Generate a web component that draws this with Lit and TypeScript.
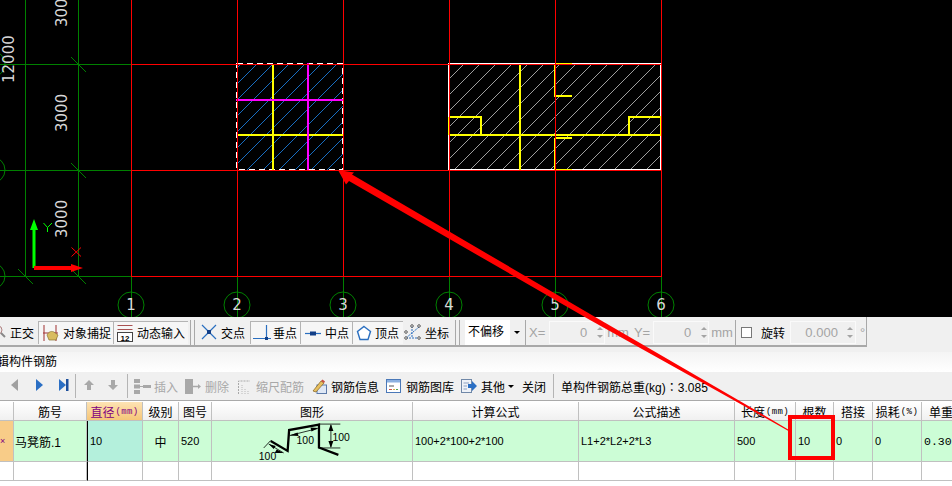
import { LitElement, css, html, svg } from 'lit';
import { customElement } from 'lit/decorators.js';

const gridX = [131, 237, 343, 449, 555, 661];
const gridY = [64, 170, 276];

// 45 degree hatch lines, clipped by the caller
const hatch = (x: number, y: number, w: number, h: number, phase: number, color: string) => {
  const out = [];
  const first = x + y;
  const last = x + w + y + h;
  for (let k = first - ((first - phase + 1600) % 16); k <= last; k += 16) {
    out.push(svg`<line x1=${k - (y + h)} y1=${y + h} x2=${k - y} y2=${y} stroke=${color} stroke-width="0.8" />`);
  }
  return out;
};

const tick = (x: number, y: number) =>
  svg`<line x1=${x - 7} y1=${y - 7} x2=${x + 8} y2=${y + 8} stroke="#008000" />`;

const cad = () => html`<svg class="cad" width="952" height="317" viewBox="0 0 952 317">
  <defs>
    <clipPath id="left"><rect x="237" y="64" width="106" height="106" /></clipPath>
    <clipPath id="right"><rect x="449" y="64" width="212" height="106" /></clipPath>
  </defs>
  <g shape-rendering="crispEdges" stroke-width="1">
    <line x1="25.5" y1="0" x2="25.5" y2="276" stroke="#008000" />
    <line x1="78.5" y1="0" x2="78.5" y2="276" stroke="#008000" />
    <line x1="0" y1="64.5" x2="131" y2="64.5" stroke="#008000" />
    <line x1="0" y1="170.5" x2="131" y2="170.5" stroke="#008000" />
    <line x1="0" y1="276.5" x2="131" y2="276.5" stroke="#008000" />
    ${gridX.map((x) => svg`<line x1=${x + 0.5} y1="276" x2=${x + 0.5} y2="317" stroke="#008000" />`)}
    ${gridY.map((y) => tick(78, y))}
    ${tick(25, 276)}
  </g>
  ${gridY.map((y) => svg`<circle cx="-8" cy=${y} r="13" fill="none" stroke="#008000" />`)}
  <g clip-path="url(#left)" shape-rendering="crispEdges">${hatch(237, 64, 106, 106, 1, '#1e88f0')}</g>
  <g clip-path="url(#right)" shape-rendering="crispEdges">${hatch(449, 64, 212, 106, 0, '#c4c4c4')}</g>
  <g shape-rendering="crispEdges" fill="none">
    <rect x="236.5" y="63.5" width="106" height="106" stroke="#fff" stroke-width="1.4" stroke-dasharray="6 4" />
    <rect x="448.5" y="63.5" width="212" height="106" stroke="#fff" stroke-width="1.4" />
    <g stroke="#ffff00" stroke-width="2">
      <path d="M273 64V170M237 135H343" />
      <path d="M520 64V170M449 135H661M449 117H481V135M661 117H629V135" />
      <path d="M449 117V135M661 117V135" />
    </g>
    <g stroke="#ffff00" stroke-width="1.5">
      <path d="M555 63.5H572M555 64V96H572M555 138H572M555 138V170M555 169.5H572" />
    </g>
    <g stroke="#ff00ff" stroke-width="2">
      <path d="M308 63V170M236 100H344" />
    </g>
    <g stroke="#ff0000" stroke-width="1">
      ${gridX.map((x) => svg`<line x1=${x + 0.5} y1="0" x2=${x + 0.5} y2="277" />`)}
      ${gridY.map((y) => svg`<line x1="131" y1=${y + 0.5} x2="662" y2=${y + 0.5} />`)}
    </g>
  </g>
  <g class="dim">
    <text transform="translate(14 83) rotate(-90)">12000</text>
    <text transform="translate(67 27) rotate(-90)">3000</text>
    <text transform="translate(67 132) rotate(-90)">3000</text>
    <text transform="translate(67 238) rotate(-90)">3000</text>
  </g>
  ${gridX.map(
    (x, i) => svg`<circle cx=${x} cy="305" r="13" fill="none" stroke="#008000" />
      <text class="axis" x=${x} y="310" text-anchor="middle">${i + 1}</text>`,
  )}
  <path d="M32.5 268V230H30L34 219L38 230H35.5V268Z" fill="#00ff00" />
  <path d="M34 266H71V264L83 268L71 272V270H34Z" fill="#ff0000" />
  <path d="M43.5 223L47.5 227.5V232M52 223L47.5 227.5" fill="none" stroke="#00ff00" />
  <path d="M71.5 247.5L81 256.5M81 247.5L71.5 256.5" fill="none" stroke="#ff0000" />
</svg>`;

const icons = {
  lens: html`<svg width="16" height="16"><circle cx="8" cy="6" r="4" fill="#eee" stroke="#b08080" /><path d="M11 9L15 13" stroke="#888" stroke-width="2" /></svg>`,
  snap: html`<svg width="16" height="20"><path d="M1 2V18M13 2V18" stroke="#a03030" /><path d="M0 10H15" stroke="#a03030" /><path d="M4 12C6 8 9 8 11 9L15 12L13 17H6Z" fill="#d8bc60" stroke="#8a7430" stroke-width=".7" /></svg>`,
  input: html`<svg width="16" height="18"><path d="M0.5 1.5H15.5M0.5 5.5H15.5" stroke="#a85050" /><rect x=".5" y="8.5" width="15" height="9" fill="#fff" stroke="#444" /><text x="8" y="16.5" font-size="8" font-weight="700" text-anchor="middle" font-family="Liberation Sans">12</text></svg>`,
  cross: html`<svg width="16" height="16"><path d="M1 1L15 15M15 1L1 15" stroke="#2a6fc0" stroke-width="1.2" /><rect x="6" y="6" width="4" height="4" fill="#123f88" /></svg>`,
  foot: html`<svg width="18" height="16"><path d="M13.5 0V13M0 13.5H18" stroke="#2a6fc0" stroke-width="1.2" /><rect x="12" y="12" width="3" height="3" fill="#123f88" /></svg>`,
  mid: html`<svg width="16" height="16"><path d="M0 8.5H16" stroke="#2a6fc0" stroke-width="1.2" /><rect x="5" y="6.5" width="6" height="4" fill="#123f88" /></svg>`,
  vertex: html`<svg width="16" height="16"><path d="M8 1.5L14.5 6.5L12 14.5H4L1.5 6.5Z" fill="#fff" stroke="#2a6fc0" stroke-width="1.4" /></svg>`,
  coord: html`<svg width="18" height="16"><path d="M2 14H16M8 2V14M2 14L15 3" stroke="#2a6fc0" stroke-dasharray="2 1" fill="none" /><g fill="#fff" stroke="#333" stroke-width=".8"><circle cx="8" cy="2" r="1.3" /><circle cx="15" cy="2" r="1.3" /><circle cx="2" cy="8" r="1.3" /><circle cx="2" cy="14" r="1.3" /><circle cx="15" cy="14" r="1.3" /></g></svg>`,
  prev: html`<svg width="8" height="12"><path d="M7 0V12L0 6Z" fill="#a0a0a0" /></svg>`,
  next: html`<svg width="8" height="12"><path d="M1 0V12L8 6Z" fill="#2b6fc4" /></svg>`,
  last: html`<svg width="10" height="12"><path d="M0 0V12L7 6Z" fill="#2b6fc4" /><rect x="7" y="0" width="2.5" height="12" fill="#1c4f9c" /></svg>`,
  up: html`<svg width="10" height="10"><path d="M5 0L10 5H7V10H3V5H0Z" fill="#a8a8a8" /></svg>`,
  down: html`<svg width="10" height="10"><path d="M5 10L10 5H7V0H3V5H0Z" fill="#a8a8a8" /></svg>`,
  insert: html`<svg width="17" height="15"><g fill="#a8a8a8"><rect x="0" y="0" width="6" height="4" /><rect x="0" y="5.500" width="6" height="4" /><rect x="0" y="11" width="6" height="4" /><rect x="9" y="6" width="8" height="3" /></g><path d="M6 7.500H9" stroke="#a8a8a8" /></svg>`,
  del: html`<svg width="16" height="15"><rect x="0" y="0" width="8" height="15" fill="#a8a8a8" /><path d="M8 7.500H13" stroke="#a8a8a8" stroke-width="1.500" /><path d="M13 5L16 7.500L13 10Z" fill="#a8a8a8" /></svg>`,
  scale: html`<svg width="13" height="15"><path d="M.5 15V2H12" fill="none" stroke="#a8a8a8" stroke-dasharray="2 1" /><path d="M4 15V6M7 15V9M10 15V12" stroke="#b8b8b8" stroke-dasharray="1 1" /></svg>`,
  pencil: html`<svg width="15" height="15"><rect x="5" y="6" width="9.500" height="8.500" fill="#dfe8f5" stroke="#5c7aa8" /><path d="M1 12L9 2L12 4L4 13Z" fill="#e8c060" stroke="#806020" stroke-width=".7" /><path d="M9 2L12 4L13 2.500L10.500 .5Z" fill="#c85040" /></svg>`,
  library: html`<svg width="15" height="14"><rect x=".5" y=".5" width="14" height="13" fill="#fff" stroke="#4a78b8" /><rect x="1" y="1" width="13" height="2.500" fill="#8cb0e0" /><path d="M3 7H8" stroke="#555" /><path d="M3 10.500H6" stroke="#d05050" /><path d="M7 10.500H9" stroke="#d8b040" /><path d="M10 10.500H12" stroke="#50a050" /></svg>`,
  other: html`<svg width="16" height="14"><rect x=".5" y=".5" width="10" height="13" fill="#eef2f8" stroke="#7088a8" /><path d="M2.500 4H8M2.500 7H6M2.500 10H6" stroke="#8ca0c0" /><path d="M7 5H11V2L16 7L11 12V9H7Z" fill="#2b6fc4" /></svg>`,
};

const spinner = html`<span class="spin"><i class="inc"></i><i class="dec"></i></span>`;

const figure = html`<svg class="figure" width="201" height="40" viewBox="0 0 201 40">
  <path d="M59 20L76 30L77.500 9L107.500 3.500V26.500L127 34" fill="none" stroke="#000" stroke-width="2.300" />
  <g fill="none" stroke="#000" stroke-width=".8">
    <path d="M107 3H129M107 27H129M119.500 4V26" />
    <path d="M78 14.500L106 7.500" />
    <path d="M52 27L59 19.500M57 23L72 32" />
  </g>
  <path d="M119.500 3L117 10H122ZM119.500 27L117 20H122ZM107 7L99 6.500L100 10.500ZM78 14.500L86 11.500L87 15ZM72 32L65 28.500L63 32ZM57 23L64 25L62 28Z" fill="#000" />
  <text x="121" y="20">100</text>
  <text x="85" y="23">100</text>
  <text x="47" y="39">100</text>
</svg>`;

@customElement('app-root')
export class AppRoot extends LitElement {
  static styles = css`
    :host {
      display: block;
      position: relative;
      width: 952px;
      height: 486px;
      overflow: hidden;
      background: #fff;
      font-family: 'Liberation Sans', 'Noto Sans CJK SC', sans-serif;
      font-size: 12px;
      color: #000;
    }

    .cad {
      display: block;
      background: #000;
    }
    .dim text {
      font-family: 'DejaVu Sans', sans-serif;
      font-size: 15px;
      fill: #d8d8d8;
    }
    .axis {
      font-family: 'DejaVu Sans', sans-serif;
      font-size: 15px;
      fill: #d8d8d8;
    }

    /* snap toolbar */
    .tools {
      height: 35px;
      background: #f0f0f0;
    }
    .snap {
      display: flex;
      align-items: center;
      width: 867px;
      height: 30px;
      box-sizing: border-box;
      padding-top: 2px;
      border-right: 1px solid #a8a8a8;
      border-bottom: 2px solid #a8a8a8;
      overflow: hidden;
    }
    .tool {
      display: flex;
      flex: none;
      align-items: center;
      gap: 4px;
      height: 23px;
      box-sizing: border-box;
      white-space: nowrap;
    }
    .tool.on {
      border-top: 1px solid #b4b4b4;
      border-left: 1px solid #b4b4b4;
      background: #f6f6f6;
    }
    .ortho { width: 48px; margin-left: -10px; }
    .capture { width: 75px; padding-left: 4px; }
    .dynamic { width: 75px; padding-left: 3px; }
    .cross { width: 49px; margin-left: 1px; }
    .foot { width: 50px; padding-left: 2px; gap: 2px; }
    .mid { width: 52px; padding-left: 4px; }
    .vertex { width: 51px; padding-left: 3px; gap: 3px; }
    .coord { width: 49px; margin-left: 1px; gap: 3px; }
    .grip {
      flex: none;
      width: 1px;
      height: 25px;
      margin: 0 3px 0 2px;
      background: #a8a8a8;
    }
    .grip.double {
      width: 5px;
      margin-right: 5px;
      box-sizing: border-box;
      border-left: 1px solid #a8a8a8;
      border-right: 1px solid #a8a8a8;
      background: none;
    }
    .offset {
      flex: none;
      width: 45px;
      height: 25px;
      padding-left: 3px;
      box-sizing: border-box;
      line-height: 25px;
      background: #fff;
    }
    .caret {
      flex: none;
      width: 0;
      height: 0;
      margin: 0 3px 0 4px;
      border: 3px solid transparent;
      border-top: 3px solid #000;
      border-bottom: 0;
    }
    .faint {
      flex: none;
      color: #a4a4a4;
      font-size: 13px;
    }
    .field {
      display: flex;
      flex: none;
      align-items: center;
      justify-content: flex-end;
      gap: 10px;
      height: 23px;
      box-sizing: border-box;
      padding-right: 1px;
      border: 1px solid #fafafa;
      color: #a4a4a4;
      font-size: 13px;
    }
    .field.short { width: 56px; margin: 0 2px 0 4px; }
    .field.short.second { margin-left: 3px; }
    .field.wide { width: 66px; margin: 0 4px 0 5px; gap: 9px; padding-right: 2px; }
    .spin {
      display: flex;
      flex-direction: column;
      gap: 5px;
    }
    .spin i {
      display: block;
      width: 0;
      height: 0;
      border: 3px solid transparent;
    }
    .spin .inc { border-top: 0; border-bottom: 3px solid #a4a4a4; }
    .spin .dec { border-bottom: 0; border-top: 3px solid #a4a4a4; }
    .yfield { margin-left: 5px; }
    .check {
      flex: none;
      width: 11px;
      height: 11px;
      box-sizing: border-box;
      margin: 0 9px 0 2px;
      border: 1px solid #777;
      background: #fff;
    }
    .rotate { flex: none; }

    /* title band */
    .title-wrap {
      overflow: hidden;
      height: 20px;
      background: linear-gradient(#f4f4f4, #fff);
    }
    .title {
      line-height: 20px;
      margin-left: -15px;
      white-space: nowrap;
    }

    /* rebar toolbar */
    .rebar {
      display: flex;
      align-items: center;
      height: 29px;
      box-sizing: border-box;
      border-bottom: 1px solid #aaa;
      background: #f0f0f0;
      overflow: hidden;
      white-space: nowrap;
    }
    .btn {
      display: flex;
      flex: none;
      align-items: center;
      gap: 5px;
    }
    .btn.off { color: #a8a8a8; }
    .nav1 { margin-left: 11px; }
    .nav2 { margin-left: 16px; }
    .nav3 { margin-left: 16px; }
    .bar {
      flex: none;
      width: 1px;
      height: 24px;
      background: #b4b4b4;
    }
    .bar1 { margin: 0 8px 0 6px; }
    .move-down { margin-left: 14px; }
    .bar2 { margin: 0 6px 0 9px; }
    .ins { margin-right: 7px; gap: 3px; }
    .rem { margin-right: 9px; gap: 4px; }
    .scl { margin-right: 8px; gap: 5px; }
    .info { margin-right: 7px; gap: 4px; }
    .lib { margin-right: 7px; gap: 5px; }
    .oth { margin-right: 3px; gap: 4px; }
    .arrow {
      flex: none;
      width: 0;
      height: 0;
      margin-right: 8px;
      border: 3px solid transparent;
      border-top: 3px solid #000;
      border-bottom: 0;
    }
    .close { flex: none; }
    .bar3 { margin: 0 7px; }
    .total { flex: none; }
    .total b { font-weight: 400; font-family: 'Noto Sans CJK TC', sans-serif; }

    /* rebar table */
    .table {
      display: grid;
      grid-template-columns: 14px 73px 56px 36px 33px 201px 166px 156px 61px 38px 39px 49px 90px;
      grid-template-rows: 19px 41px 19px;
      margin-top: 1px;
      font-size: 11px;
    }
    .table > div {
      display: flex;
      align-items: center;
      box-sizing: border-box;
      overflow: hidden;
      padding-left: 2px;
      border-right: 1px solid #c0c0c0;
      border-bottom: 1px solid #c0c0c0;
      white-space: nowrap;
    }
    .table > .head {
      justify-content: center;
      padding: 0;
      background: linear-gradient(#fff, #f0f0f0);
      font-size: 12px;
    }
    .head small {
      margin: 2px 0 0 1px;
      font-size: 9px;
      letter-spacing: 0.4px;
      font-family: 'Liberation Mono', monospace;
    }
    .table > .head.active {
      background: linear-gradient(#fde3b4, #f6c678);
      color: #800080;
    }
    .table > .head.start {
      justify-content: flex-start;
      padding-left: 7px;
    }
    .table > .row { background: #ccfdd6; }
    .table > .row.name { padding-left: 1px; font-size: 12px; }
    .table > .row.center { justify-content: center; padding: 0; font-size: 12px; }
    .table > .row.current {
      background: #b4f0dc;
      border-left: 1px solid #000;
    }
    .table > .row.fig { padding: 0; }
    .table > .row.weight {
      padding-left: 2px;
      font-family: 'Liberation Mono', monospace;
      font-size: 11.500px;
    }
    .table > .pick {
      justify-content: flex-start;
      padding: 0;
      background: #f8cc88;
      color: #800080;
      font-size: 9px;
    }
    .table > .current-empty { border-left: 1px solid #000; }
    .figure { display: block; }
    .figure text {
      font-family: 'Liberation Sans', sans-serif;
      font-size: 10.500px;
    }

    /* annotation drawn over everything */
    .note {
      position: absolute;
      left: 0;
      top: 0;
      pointer-events: none;
    }
  `;

  render() {
    return html`
      ${cad()}
      <div class="tools">
        <div class="snap">
          <div class="tool ortho">${icons.lens}<span>正交</span></div>
          <div class="tool capture on">${icons.snap}<span>对象捕捉</span></div>
          <div class="tool dynamic on">${icons.input}<span>动态输入</span></div>
          <span class="grip double"></span>
          <div class="tool cross">${icons.cross}<span>交点</span></div>
          <div class="tool foot on">${icons.foot}<span>垂点</span></div>
          <div class="tool mid on">${icons.mid}<span>中点</span></div>
          <div class="tool vertex on">${icons.vertex}<span>顶点</span></div>
          <div class="tool coord">${icons.coord}<span>坐标</span></div>
          <span class="grip double"></span>
          <span class="offset">不偏移</span>
          <span class="caret"></span>
          <span class="grip"></span>
          <span class="faint">X=</span>
          <div class="field short"><span>0</span>${spinner}</div>
          <span class="faint">mm</span>
          <span class="faint yfield">Y=</span>
          <div class="field short second"><span>0</span>${spinner}</div>
          <span class="faint">mm</span>
          <span class="grip"></span>
          <span class="check"></span>
          <span class="rotate">旋转</span>
          <div class="field wide"><span>0.000</span>${spinner}</div>
          <span class="faint">°</span>
        </div>
      </div>
      <div class="title-wrap"><div class="title">编辑构件钢筋</div></div>
      <div class="rebar">
        <span class="nav1">${icons.prev}</span>
        <span class="nav2">${icons.next}</span>
        <span class="nav3">${icons.last}</span>
        <span class="bar bar1"></span>
        <span>${icons.up}</span>
        <span class="move-down">${icons.down}</span>
        <span class="bar bar2"></span>
        <div class="btn off ins">${icons.insert}<span>插入</span></div>
        <div class="btn off rem">${icons.del}<span>删除</span></div>
        <div class="btn off scl">${icons.scale}<span>缩尺配筋</span></div>
        <div class="btn info">${icons.pencil}<span>钢筋信息</span></div>
        <div class="btn lib">${icons.library}<span>钢筋图库</span></div>
        <div class="btn oth">${icons.other}<span>其他</span></div>
        <span class="arrow"></span>
        <span class="close">关闭</span>
        <span class="bar bar3"></span>
        <span class="total">单构件钢筋总重(kg)<b>：</b>3.085</span>
      </div>
      <div class="table">
        <div class="head"></div>
        <div class="head">筋号</div>
        <div class="head active">直径<small>(mm)</small></div>
        <div class="head">级别</div>
        <div class="head">图号</div>
        <div class="head">图形</div>
        <div class="head">计算公式</div>
        <div class="head">公式描述</div>
        <div class="head">长度<small>(mm)</small></div>
        <div class="head">根数</div>
        <div class="head">搭接</div>
        <div class="head">损耗<small>(%)</small></div>
        <div class="head start">单重(kg)</div>

        <div class="pick">×</div>
        <div class="row name">马凳筋.1</div>
        <div class="row current">10</div>
        <div class="row center">中</div>
        <div class="row">520</div>
        <div class="row fig">${figure}</div>
        <div class="row">100+2*100+2*100</div>
        <div class="row">L1+2*L2+2*L3</div>
        <div class="row">500</div>
        <div class="row">10</div>
        <div class="row">0</div>
        <div class="row">0</div>
        <div class="row weight">0.309</div>

        <div></div>
        <div></div>
        <div class="current-empty"></div>
        <div></div>
        <div></div>
        <div></div>
        <div></div>
        <div></div>
        <div></div>
        <div></div>
        <div></div>
        <div></div>
        <div></div>
      </div>
      <svg class="note" width="952" height="486" viewBox="0 0 952 486">
        <path d="M338 170L354 172.500L352 174.500L590 314L745 404L789 430L788.500 431L745 406.500L590 320L349 181L346 184.500Z" fill="#ff0000" />
        <rect x="790" y="417" width="43" height="41" fill="none" stroke="#ff0000" stroke-width="4" />
      </svg>
    `;
  }
}
